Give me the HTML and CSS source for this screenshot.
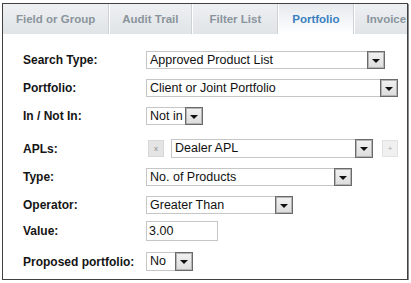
FILE: index.html
```html
<!DOCTYPE html>
<html lang="en">
<head>
  <meta charset="UTF-8" />
  <title>Portfolio Filter</title>
  <link rel="stylesheet" href="styles.css">
</head>
<body>
  <div class="panel">
    <div class="tabs">
      <div class="tab">Field or Group</div>
      <div class="tab">Audit Trail</div>
      <div class="tab tab-wide">Filter List</div>
      <div class="tab active">Portfolio</div>
      <div class="tab">Invoice</div>
    </div>

    <div class="form">
      <div class="row">
        <label>Search Type:</label>
        <div class="select w-search"><span>Approved Product List</span><i class="arrow"></i></div>
      </div>
      <div class="row">
        <label>Portfolio:</label>
        <div class="select w-portfolio"><span>Client or Joint Portfolio</span><i class="arrow"></i></div>
      </div>
      <div class="row">
        <label>In / Not In:</label>
        <div class="select w-in"><span>Not in</span><i class="arrow"></i></div>
      </div>
      <div class="row row-apl">
        <label>APLs:</label>
        <div class="mini-btn remove">x</div>
        <div class="select w-apl"><span>Dealer APL</span><i class="arrow"></i></div>
        <div class="mini-btn add">+</div>
      </div>
      <div class="row">
        <label>Type:</label>
        <div class="select w-type"><span>No. of Products</span><i class="arrow"></i></div>
      </div>
      <div class="row">
        <label>Operator:</label>
        <div class="select w-operator"><span>Greater Than</span><i class="arrow"></i></div>
      </div>
      <div class="row row-value">
        <label>Value:</label>
        <div class="input">3.00</div>
      </div>
      <div class="row row-proposed">
        <label>Proposed portfolio:</label>
        <div class="select w-proposed"><span>No</span><i class="arrow"></i></div>
      </div>
    </div>
  </div>
</body>
</html>
```

FILE: styles.css
```css
* {
  margin: 0;
  padding: 0;
  box-sizing: border-box;
}

body {
  background: #fff;
  font-family: "Liberation Sans", Arial, sans-serif;
  color: #111;
}

.panel {
  margin: 3px 0 0 2px;
  width: 406px;
  height: 277px;
  border: 1px solid #404040;
  box-shadow: 1px 1px 0 #8c8c8c;
  overflow: hidden;
  background: #fff;
}

/* tab strip */
.tabs {
  display: flex;
  height: 30px;
  background: linear-gradient(to bottom, #eef0f2, #e0e4e7);
  overflow: hidden;
  white-space: nowrap;
}

.tab {
  flex: none;
  padding: 0 13px;
  line-height: 30px;
  font-size: 11.5px;
  font-weight: bold;
  color: #8a949c;
  border-right: 1px solid #cdd2d6;
  box-shadow: 1px 0 0 #fff;
}

.tab-wide {
  padding: 0 16px 0 17px;
}

.tab.active {
  color: #3a7fc2;
  background: linear-gradient(to bottom, #e6eaee, #fff);
  margin-left: 1px;
}

/* form rows */
.form {
  display: flex;
  flex-direction: column;
  gap: 10px;
  padding: 17px 0 0 20px;
}

.row {
  display: flex;
  align-items: center;
  height: 18px;
}

.row label {
  flex: none;
  width: 123px;
  font-size: 12px;
  font-weight: bold;
  color: #151515;
}

.row-apl {
  height: 19px;
  margin-top: 4px;
}

.row-value {
  height: 20px;
  margin-top: -3px;
}

.row-proposed {
  height: 19px;
  margin-top: 1px;
}

/* select box */
.select {
  display: flex;
  align-items: stretch;
  height: 100%;
  border: 1px solid #c6c6c6;
  background: #fff;
}

.select span {
  flex: 1;
  padding-left: 3px;
  font-size: 12.5px;
  line-height: 16px;
  color: #111;
  white-space: nowrap;
  overflow: hidden;
}

.arrow {
  flex: none;
  position: relative;
  width: 18px;
  margin: -1px -1px -1px 0;
  border: 1px solid #6a6a6a;
  box-shadow: inset 0 0 0 1px #b4b4b4;
  background: linear-gradient(to bottom, #f2f2f2, #dcdcdc);
}

.arrow::after {
  content: "";
  position: absolute;
  left: 4px;
  top: 7px;
  border-left: 4px solid transparent;
  border-right: 4px solid transparent;
  border-top: 4px solid #111;
}

.w-search { width: 239px; }
.w-portfolio { width: 252px; }
.w-in { width: 57px; }
.w-apl { width: 202px; margin: 0 9px 0 7px; }
.w-type { width: 206px; }
.w-operator { width: 147px; }
.w-proposed { width: 47px; }

.input {
  width: 72px;
  height: 100%;
  border: 1px solid #c6c6c6;
  padding-left: 2px;
  font-size: 12.5px;
  line-height: 18px;
}

.mini-btn {
  flex: none;
  width: 16px;
  height: 17px;
  font-size: 8px;
  line-height: 16px;
  text-align: center;
}

.mini-btn.remove {
  margin-left: 2px;
  background: #e4e4e4;
  border: 1px solid #d8d8d8;
  color: #8a8a8a;
}

.mini-btn.add {
  background: #f0f0f0;
  border: 1px solid #e2e2e2;
  color: #aaa;
}
```
